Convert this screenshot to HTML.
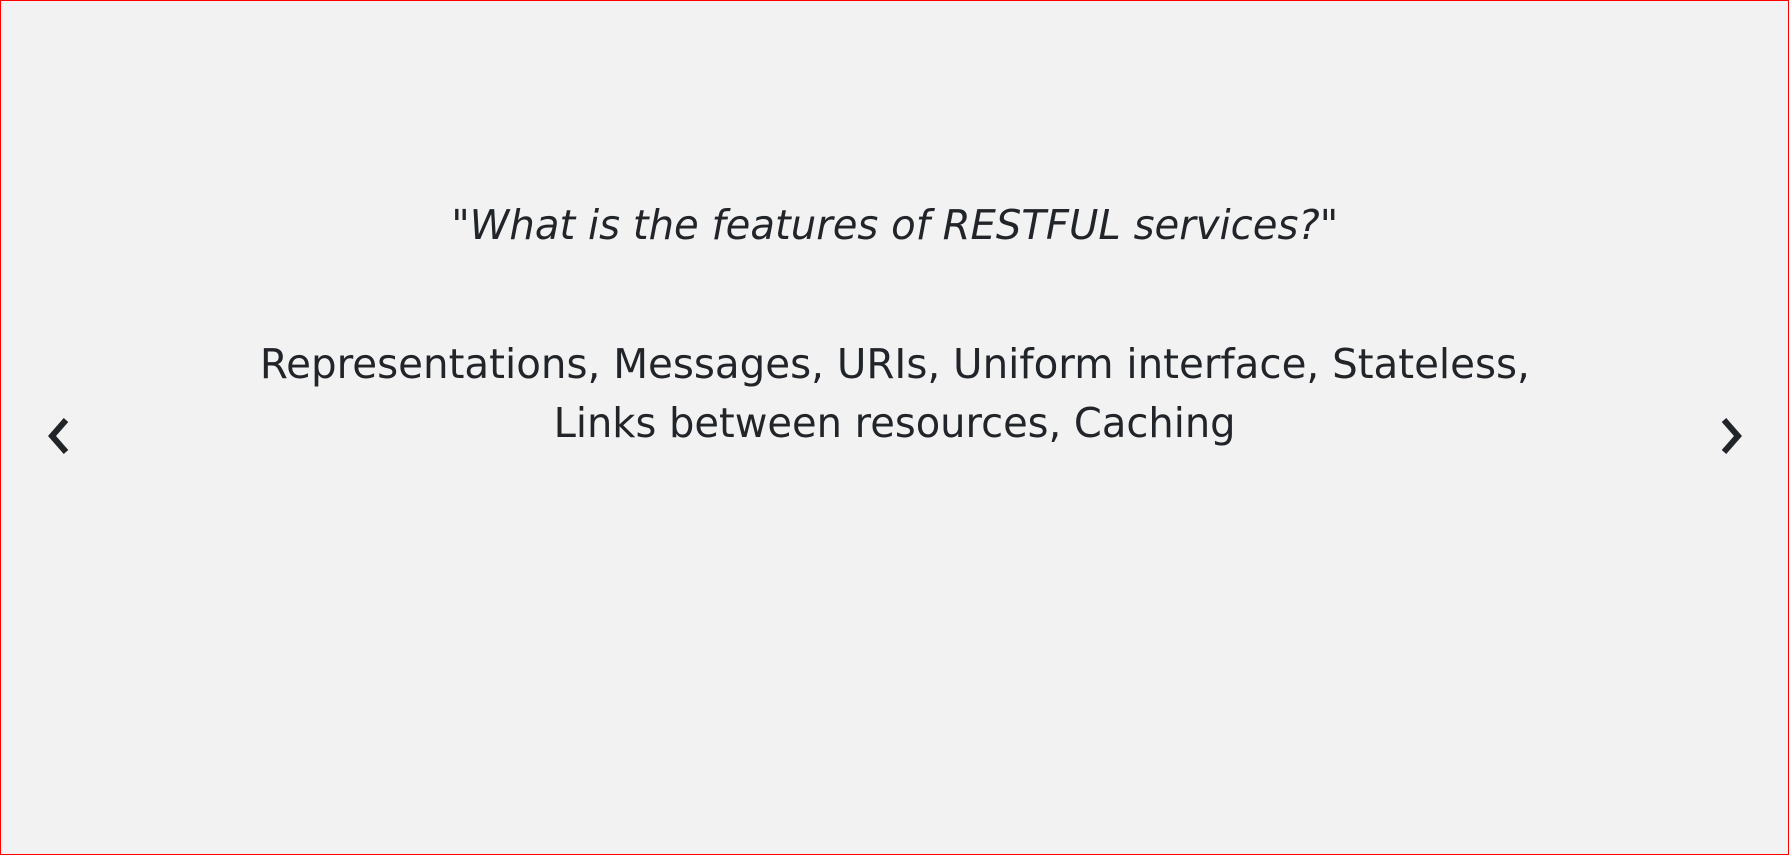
<!DOCTYPE html>
<html><head><meta charset="utf-8"><style>
html,body{margin:0;padding:0}
body{width:1789px;height:855px;background:#f2f2f2;position:relative;overflow:hidden;font-family:"DejaVu Sans",sans-serif;color:#212529}
.frame{position:absolute;left:0;top:0;width:1787px;height:853px;border:1px solid #ff0000}
.l{position:absolute;left:0;width:1789px;text-align:center;white-space:nowrap;font-size:41px;line-height:41px}
.l span{display:inline-block}
.q{font-style:italic}
svg{position:absolute}
</style></head><body>
<div class="frame"></div>
<div class="l q" style="top:205px"><span id="a">"What is the features of RESTFUL services?"</span></div>
<div class="l" style="top:344px"><span id="b">Representations, Messages, URIs, Uniform interface, Stateless,</span></div>
<div class="l" style="top:403px"><span id="c">Links between resources, Caching</span></div>
<svg style="left:44px;top:416px" width="30" height="40" viewBox="0 0 30 40"><polyline points="22,4 8,20 22,36" fill="none" stroke="#212529" stroke-width="6"/></svg>
<svg style="left:1716px;top:416px" width="30" height="40" viewBox="0 0 30 40"><polyline points="8,4 22,20 8,36" fill="none" stroke="#212529" stroke-width="6"/></svg>
<script>
[["a",887],["b",1270],["c",682]].forEach(function(p){var e=document.getElementById(p[0]);var w=e.getBoundingClientRect().width;e.style.transform="scaleX("+(p[1]/w)+")";});
</script>
</body></html>
